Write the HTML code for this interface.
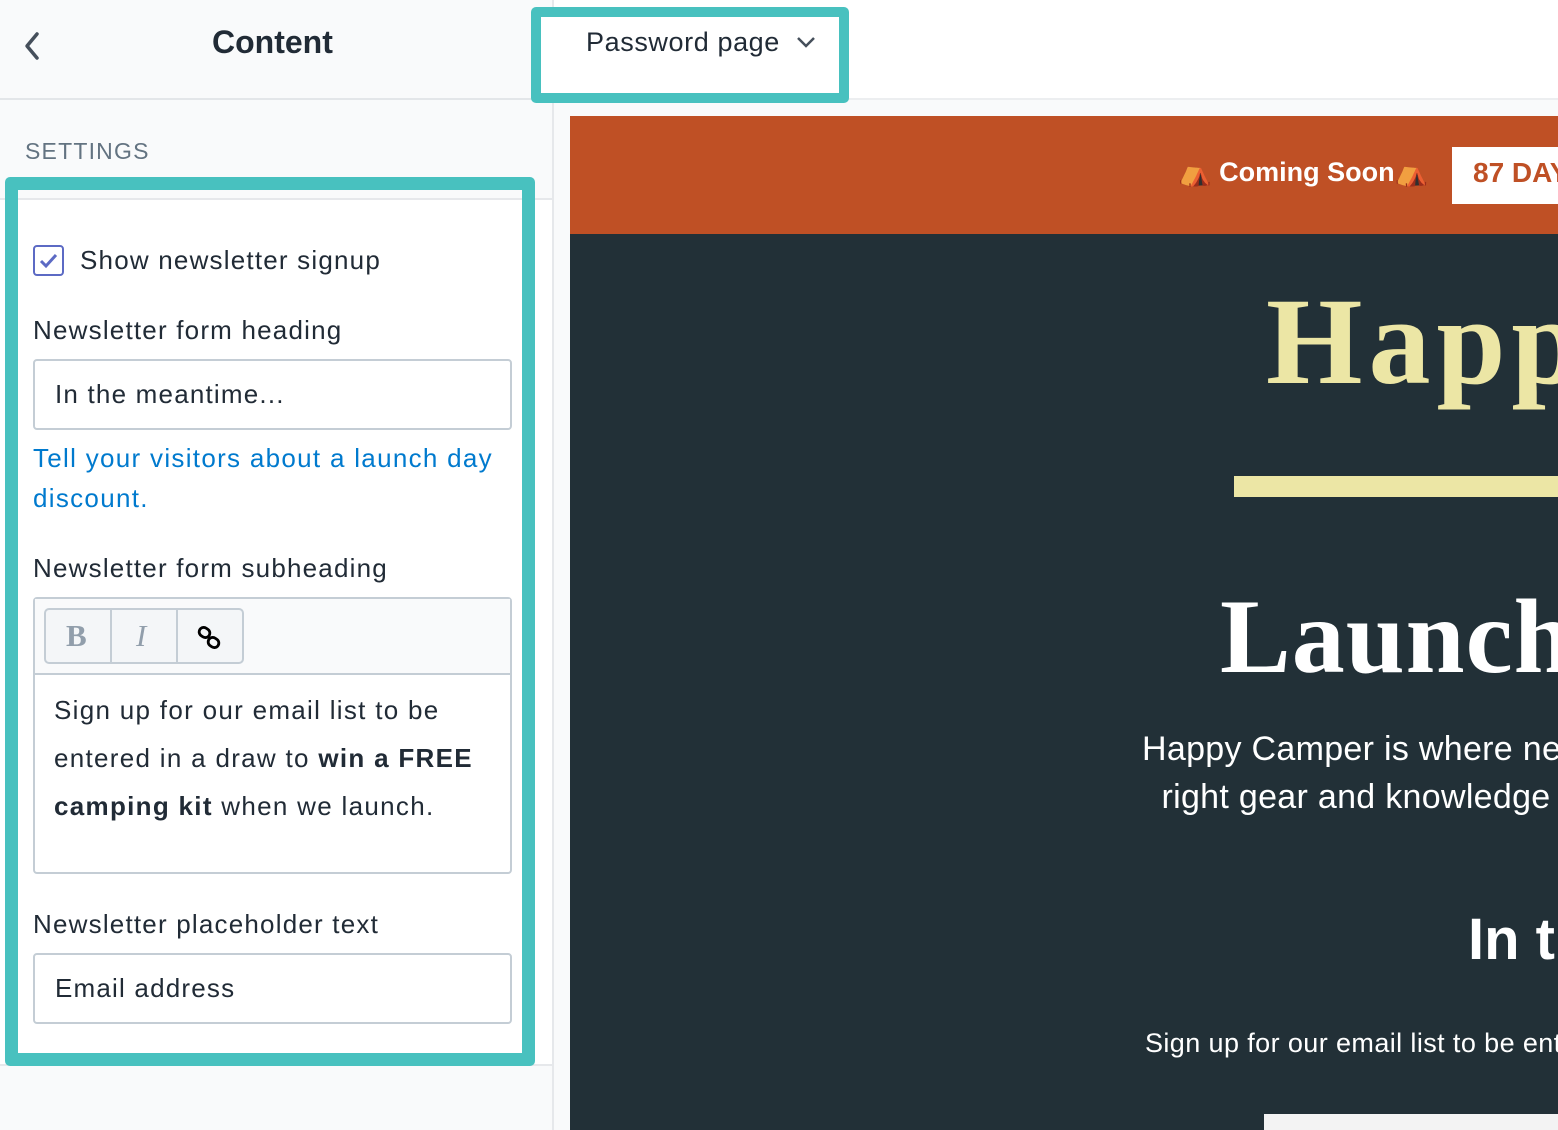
<!DOCTYPE html>
<html><head><meta charset="utf-8"><style>
*{margin:0;padding:0;box-sizing:border-box}
body{width:1558px;height:1130px;overflow:hidden;background:#f9fafb;font-family:"Liberation Sans",sans-serif;color:#212b36;position:relative}
.a{position:absolute;white-space:nowrap}
.lbl{font-size:26px;color:#212b36;letter-spacing:1.2px}
.inp{position:absolute;left:33px;width:479px;height:71px;border:2px solid #c4cdd5;border-radius:4px;background:#fff;font-size:26px;padding:18px 20px;letter-spacing:1.2px}
</style></head><body>
<div class="a" style="left:0;top:0;width:552px;height:100px;border-bottom:2px solid #e3e6e9;background:#f9fafb"></div>
<svg class="a" style="left:20px;top:30px" width="24" height="32" viewBox="0 0 24 32"><path d="M17 4 L7 16 L17 28" fill="none" stroke="#454f5b" stroke-width="3.5" stroke-linecap="round" stroke-linejoin="round"/></svg>
<div class="a" style="left:212px;top:24px;font-size:32px;font-weight:bold;color:#212b36">Content</div>
<div class="a" style="left:552px;top:0;width:2px;height:1130px;background:#e6e8eb"></div>
<div class="a" style="left:554px;top:0;width:1004px;height:100px;background:#fff;border-bottom:2px solid #eceef0"></div>
<div class="a" style="left:531px;top:7px;width:318px;height:96px;border:10px solid #48c1bf;border-radius:5px;background:#fff"></div>
<div class="a" style="left:586px;top:27px;font-size:27px;color:#212b36;letter-spacing:0.6px">Password page</div>
<svg class="a" style="left:795px;top:34px" width="22" height="16" viewBox="0 0 22 16"><path d="M3 4 L11 12 L19 4" fill="none" stroke="#454f5b" stroke-width="2.5"/></svg>
<div class="a" style="left:25px;top:138px;font-size:23px;color:#637381;letter-spacing:1.2px">SETTINGS</div>
<div class="a" style="left:0;top:198px;width:552px;height:868px;background:#fff;border-top:2px solid #e6e8eb;border-bottom:2px solid #e6e8eb"></div>
<div class="a" style="left:5px;top:177px;width:530px;height:889px;border:13px solid #48c1bf;border-radius:5px"></div>
<div class="a" style="left:33px;top:245px;width:31px;height:31px;border:2px solid #5c6ac4;border-radius:4px;background:#fff"></div>
<svg class="a" style="left:36px;top:248px" width="25" height="25" viewBox="0 0 25 25"><path d="M5 13 L10 18 L20 7" fill="none" stroke="#5c6ac4" stroke-width="3"/></svg>
<div class="a lbl" style="left:80px;top:245px">Show newsletter signup</div>
<div class="a lbl" style="left:33px;top:315px">Newsletter form heading</div>
<div class="inp" style="top:359px">In the meantime...</div>
<div class="a" style="left:33px;top:438px;font-size:26px;line-height:40px;color:#007ace;letter-spacing:1.3px">Tell your visitors about a launch day<br>discount.</div>
<div class="a lbl" style="left:33px;top:553px">Newsletter form subheading</div>
<div class="a" style="left:33px;top:597px;width:479px;height:277px;border:2px solid #c4cdd5;border-radius:4px;background:#fff"></div>
<div class="a" style="left:35px;top:599px;width:475px;height:76px;background:#f9fafb;border-bottom:2px solid #c4cdd5"></div>
<div class="a" style="left:44px;top:608px;width:200px;height:56px;border:2px solid #c4cdd5;border-radius:5px;background:#f4f6f8"></div>
<div class="a" style="left:110px;top:610px;width:2px;height:52px;background:#c4cdd5"></div>
<div class="a" style="left:176px;top:610px;width:2px;height:52px;background:#c4cdd5"></div>
<div class="a" style="left:66px;top:618px;font-family:'Liberation Serif',serif;font-weight:bold;font-size:31px;color:#919eab">B</div>
<div class="a" style="left:136px;top:618px;font-family:'Liberation Serif',serif;font-style:italic;font-size:31px;color:#919eab">I</div>
<svg class="a" style="left:196px;top:625px" width="28" height="26" viewBox="0 0 28 26"><g fill="none" stroke="#000" stroke-width="2.8"><rect x="3" y="3" width="11" height="9" rx="4.5" transform="rotate(35 8.5 7.5)"/><rect x="12" y="13" width="11" height="9" rx="4.5" transform="rotate(35 17.5 17.5)"/></g></svg>
<div class="a" style="left:54px;top:686px;font-size:26px;line-height:48px;color:#212b36;letter-spacing:1.3px">Sign up for our email list to be<br>entered in a draw to <b>win a FREE</b><br><b>camping kit</b> when we launch.</div>
<div class="a lbl" style="left:33px;top:909px">Newsletter placeholder text</div>
<div class="inp" style="top:953px">Email address</div>
<div class="a" style="left:570px;top:116px;width:988px;height:1014px;background:#223037;overflow:hidden">
 <div class="a" style="left:0;top:0;width:988px;height:118px;background:#bf5025"></div>
 <div class="a" style="left:608px;top:40px;font-size:27px;font-weight:bold;color:#fff">⛺ Coming Soon⛺</div>
 <div class="a" style="left:882px;top:31px;width:120px;height:57px;background:#fff"></div>
 <div class="a" style="left:903px;top:41px;font-size:28px;font-weight:bold;color:#bf5025">87 DAYS</div>
 <div class="a" style="left:696px;top:155px;font-family:'Liberation Serif',serif;font-weight:bold;font-size:124px;color:#ece6a5;letter-spacing:6px">Happy</div>
 <div class="a" style="left:664px;top:360px;width:400px;height:21px;background:#ece6a5"></div>
 <div class="a" style="left:650px;top:460px;font-family:'Liberation Serif',serif;font-weight:bold;font-size:106px;color:#fff;letter-spacing:1px">Launch</div>
 <div class="a" style="left:572px;top:609px;font-size:34px;line-height:48px;color:#fff;letter-spacing:0.3px">Happy Camper is where new<br>&nbsp;&nbsp;right gear and knowledge</div>
 <div class="a" style="left:898px;top:790px;font-size:58px;font-weight:bold;color:#fff">In the</div>
 <div class="a" style="left:575px;top:912px;font-size:27px;color:#fff;letter-spacing:0.4px">Sign up for our email list to be entered</div>
 <div class="a" style="left:694px;top:998px;width:300px;height:30px;background:#f3f3f3"></div>
</div>
</body></html>
